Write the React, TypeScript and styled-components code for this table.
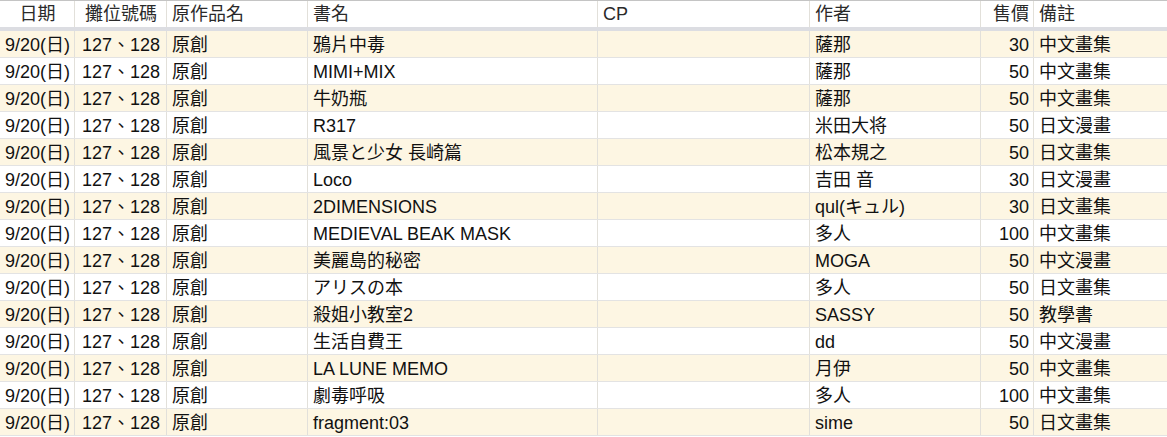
import React from "react";
import styled, { createGlobalStyle } from "styled-components";

const Global = createGlobalStyle`
  html, body { margin: 0; padding: 0; background: #fff; }
  body { font-family: "Liberation Sans", "Noto Sans CJK TC", sans-serif; }
`;

const COLS = "75px 92px 141px 290px 212px 171px 53px 1fr";

const Sheet = styled.div`
  width: 1167px;
  display: flex;
  flex-direction: column;
  border-top: 1px solid #c4c4c4;
  font-size: 18px;
  color: #111;
`;

const HeaderRow = styled.div`
  display: grid;
  grid-template-columns: ${COLS};
  height: 30px;
  border-bottom: 4px solid #dcdde2;
  box-sizing: border-box;
  background: #fff;
`;

const Row = styled.div<{ $odd: boolean }>`
  display: grid;
  grid-template-columns: ${COLS};
  height: 27px;
  box-sizing: border-box;
  border-bottom: 1px solid #e3e3e3;
  background: ${(p) => (p.$odd ? "#fdf6e3" : "#ffffff")};
`;

const Cell = styled.div<{ $align?: "left" | "center" | "right"; $last?: boolean }>`
  box-sizing: border-box;
  border-right: ${(p) => (p.$last ? "none" : "1px solid #e2e0da")};
  padding: 0 4px 0 5px;
  display: flex;
  align-items: center;
  justify-content: ${(p) =>
    p.$align === "center" ? "center" : p.$align === "right" ? "flex-end" : "flex-start"};
  white-space: nowrap;
  overflow: hidden;
  line-height: 26px;
  padding-top: 1px;
`;

const HeadCell = styled(Cell)`
  color: #2a2a2a;
  padding-top: 0;
  padding-bottom: 1px;
`;

type Item = { title: string; author: string; price: number; note: string };

const items: Item[] = [
  { title: "鴉片中毒", author: "薩那", price: 30, note: "中文畫集" },
  { title: "MIMI+MIX", author: "薩那", price: 50, note: "中文畫集" },
  { title: "牛奶瓶", author: "薩那", price: 50, note: "中文畫集" },
  { title: "R317", author: "米田大将", price: 50, note: "日文漫畫" },
  { title: "風景と少女 長崎篇", author: "松本規之", price: 50, note: "日文畫集" },
  { title: "Loco", author: "吉田 音", price: 30, note: "日文漫畫" },
  { title: "2DIMENSIONS", author: "qul(キュル)", price: 30, note: "日文畫集" },
  { title: "MEDIEVAL BEAK MASK", author: "多人", price: 100, note: "中文畫集" },
  { title: "美麗島的秘密", author: "MOGA", price: 50, note: "中文漫畫" },
  { title: "アリスの本", author: "多人", price: 50, note: "日文畫集" },
  { title: "殺姐小教室2", author: "SASSY", price: 50, note: "教學書" },
  { title: "生活自費王", author: "dd", price: 50, note: "中文漫畫" },
  { title: "LA LUNE MEMO", author: "月伊", price: 50, note: "中文畫集" },
  { title: "劇毒呼吸", author: "多人", price: 100, note: "中文畫集" },
  { title: "fragment:03", author: "sime", price: 50, note: "日文畫集" },
];

export default function App() {
  return (
    <>
      <Global />
      <Sheet>
        <HeaderRow>
          <HeadCell $align="center">日期</HeadCell>
          <HeadCell $align="center">攤位號碼</HeadCell>
          <HeadCell>原作品名</HeadCell>
          <HeadCell>書名</HeadCell>
          <HeadCell>CP</HeadCell>
          <HeadCell>作者</HeadCell>
          <HeadCell $align="right">售價</HeadCell>
          <HeadCell $last>備註</HeadCell>
        </HeaderRow>
        {items.map((it, i) => (
          <Row key={i} $odd={i % 2 === 0}>
            <Cell>9/20(日)</Cell>
            <Cell $align="center">127、128</Cell>
            <Cell>原創</Cell>
            <Cell>{it.title}</Cell>
            <Cell></Cell>
            <Cell>{it.author}</Cell>
            <Cell $align="right">{it.price}</Cell>
            <Cell $last>{it.note}</Cell>
          </Row>
        ))}
      </Sheet>
    </>
  );
}
